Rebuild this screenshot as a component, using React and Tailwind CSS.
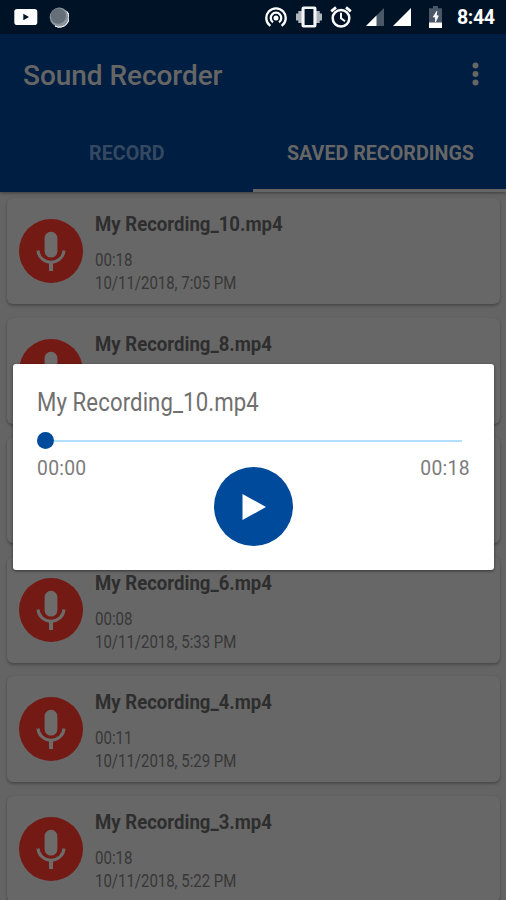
import React from "react";

const recordings = [
  { name: "My Recording_10.mp4", length: "00:18", date: "10/11/2018, 7:05 PM" },
  { name: "My Recording_8.mp4" },
  {},
  { name: "My Recording_6.mp4", length: "00:08", date: "10/11/2018, 5:33 PM" },
  { name: "My Recording_4.mp4", length: "00:11", date: "10/11/2018, 5:29 PM" },
  { name: "My Recording_3.mp4", length: "00:18", date: "10/11/2018, 5:22 PM" },
];

function StatusBar() {
  return (
    <div className="flex h-[34px] shrink-0 items-center bg-[#001226] pl-[14px] pr-[10px] text-white">
      <svg width="24" height="18" viewBox="0 0 24 18">
        <rect x="0.3" y="1" width="23" height="16" rx="2.800" fill="#fff" />
        <path d="M9.300 5.800 15 9l-5.700 3.200z" fill="#001226" />
      </svg>
      <svg className="ml-[11px]" width="20" height="22" viewBox="0 0 20 22">
        <circle cx="10.300" cy="11.200" r="9.600" fill="#8c959d" />
        <path d="M18 5.500A9.600 9.600 0 0 1 6 20a9.600 9.600 0 0 0 12-14.500z" fill="#f1f4f6" stroke="#f1f4f6" />
        <circle cx="9.300" cy="10" r="7.700" fill="#646f7a" />
      </svg>
      <div className="ml-auto flex items-center">
        <svg width="22" height="22" viewBox="0 0 22 22" fill="none" stroke="#fff" strokeWidth="2.300">
          <circle cx="11" cy="12" r="2.500" fill="#fff" stroke="none" />
          <path d="M5.400 19.900a9.700 9.700 0 1 1 11.200 0" />
          <path d="M8 16.300a5.300 5.300 0 1 1 6 0" />
        </svg>
        <svg className="ml-[9px]" width="26" height="22" viewBox="0 0 26 22">
          <path d="M0 7.500h2.300v7H0zM2.300 5H6v12H2.300zM20 5h3.700v12H20zM23.700 7.500H26v7h-2.300z" fill="#aeb4ba" />
          <path fillRule="evenodd" d="M7.500 0.500h11a2 2 0 0 1 2 2v17a2 2 0 0 1-2 2h-11a2 2 0 0 1-2-2v-17a2 2 0 0 1 2-2zM8.600 3v16h8.800V3z" fill="#f4f5f6" />
        </svg>
        <svg className="ml-[8px]" width="22" height="22" viewBox="0 0 22 22" fill="none" stroke="#fff">
          <circle cx="11" cy="12.200" r="8.300" strokeWidth="2.500" />
          <path d="M11 6.800v5.500l4 3" strokeWidth="2" />
          <path d="M1.200 5.400 6 1.400M20.800 5.400 16 1.400" strokeWidth="2.700" />
        </svg>
        <svg className="ml-[14px]" width="18" height="18" viewBox="0 0 18 18">
          <path d="M18 0v18H0z" fill="#4a5767" />
          <path d="M10.500 7.500V18H0z" fill="#fff" />
        </svg>
        <svg className="ml-[9px]" width="18" height="18" viewBox="0 0 18 18">
          <path d="M18 0v18H0z" fill="#fff" />
        </svg>
        <svg className="ml-[18px]" width="13" height="22" viewBox="0 0 13 22">
          <path d="M4 0h5v2.300h4V17H0V2.300h4z" fill="#4a5767" />
          <path d="M0 16.500h13V22H0z" fill="#fff" />
          <path d="M7.800 5.300 4.300 11h2.200V16L9.300 9.800H7.200z" fill="#fff" stroke="#fff" strokeWidth=".8" />
        </svg>
        <span className="ml-[15px] w-[39px] whitespace-nowrap pt-[2px] text-[19.500px] font-bold leading-none tracking-[-0.4px]">
          8:44
        </span>
      </div>
    </div>
  );
}

function MicBadge() {
  return (
    <svg className="mt-[21px] shrink-0" width="64" height="64" viewBox="0 0 64 64">
      <circle cx="32" cy="32" r="32" fill="#741a14" />
      <rect x="25.600" y="12.800" width="12.800" height="25.700" rx="6.300" fill="#6e6b6b" />
      <path d="M19 31.500C19.600 38.500 25 43.200 32 43.200s12.400-4.700 13-11.700" fill="none" stroke="#6e6b6b" strokeWidth="3" />
      <path d="M32 43v9" stroke="#6e6b6b" strokeWidth="4" />
    </svg>
  );
}

function Card({ item }) {
  return (
    <div className="flex h-[106px] shrink-0 rounded-[6px] bg-[#676767] pl-[12px] shadow-[0_2px_3px_rgba(0,0,0,0.25),0_0_2px_rgba(0,0,0,0.08)]">
      <MicBadge />
      {item.name && (
        <div className="ml-[12px] flex flex-col items-start whitespace-nowrap">
          <div className="mt-[14px] origin-left scale-x-[0.885] text-[21px] font-bold leading-[25px] text-[#2e2e2e]">{item.name}</div>
          {item.date && (
            <>
              <div className="mt-[12px] origin-left scale-x-[0.860] text-[17.500px] leading-[23px] text-[#383838]">{item.length}</div>
              <div className="origin-left scale-x-[0.855] text-[17.500px] leading-[23px] text-[#383838]">{item.date}</div>
            </>
          )}
        </div>
      )}
    </div>
  );
}

function Player() {
  return (
    <div className="absolute left-[13px] top-[364px] flex h-[206px] w-[481px] flex-col rounded-[3px] bg-white shadow-[0_1px_3px_rgba(0,0,0,0.5)]">
      <div className="ml-[24px] mt-[23px] w-max origin-left scale-x-[0.887] whitespace-nowrap text-[25px] leading-[32px] tracking-[0.1px] text-[#707070]">
        My Recording_10.mp4
      </div>
      <div className="ml-[24px] mr-[32px] mt-[13px] flex h-[17px] items-center">
        <div className="size-[17px] rounded-full bg-[#004a9b]" />
        <div className="h-[2px] flex-1 bg-[#b3dfff]" />
      </div>
      <div className="ml-[24px] mr-[24px] mt-[7px] flex justify-between text-[21px] leading-[24px] tracking-[0.3px] text-[#7c7c7c]">
        <span className="origin-left scale-x-[0.920]">00:00</span>
        <span className="origin-right scale-x-[0.920]">00:18</span>
      </div>
      <div className="-mt-[13px] flex size-[79px] items-center justify-center self-center rounded-full bg-[#004a9b]">
        <svg className="ml-px" width="24" height="26" viewBox="0 0 24 26">
          <path d="M0.500 0 24 13 0.500 26z" fill="#fff" />
        </svg>
      </div>
    </div>
  );
}

export default function App() {
  return (
    <div className="relative flex h-[900px] w-[506px] flex-col overflow-hidden bg-[#646464] font-['Roboto',sans-serif]">
      <StatusBar />
      <header className="z-10 flex h-[157.500px] shrink-0 flex-col bg-[#001e41] shadow-[0_1px_3px_rgba(0,0,0,0.4)]">
        <div className="flex h-[80px] items-center pl-[23px] pr-[27px]">
          <h1 className="pt-[3px] text-[28px] font-medium leading-none tracking-[-0.050px] text-[#666]">Sound Recorder</h1>
          <svg className="ml-auto" width="7" height="24" viewBox="0 0 7 24" fill="#666">
            <circle cx="3.500" cy="3.500" r="3" />
            <circle cx="3.500" cy="12" r="3" />
            <circle cx="3.500" cy="20.500" r="3" />
          </svg>
        </div>
        <div className="flex h-[77.500px] text-[20px] font-bold">
          <div className="flex flex-1 items-center justify-center text-[#344961]">
            <span className="translate-x-[0.5px] scale-x-[0.985]">RECORD</span>
          </div>
          <div className="flex flex-1 items-center justify-center border-b-[3px] border-[#666] pt-[3px] text-[#666]">
            <span className="translate-x-[0.5px] scale-x-[0.985]">SAVED RECORDINGS</span>
          </div>
        </div>
      </header>
      <main className="flex flex-col gap-[13.600px] pl-[7px] pr-[6px] pt-[6.500px]">
        {recordings.map((item, i) => (
          <Card key={i} item={item} />
        ))}
      </main>
      <Player />
    </div>
  );
}
